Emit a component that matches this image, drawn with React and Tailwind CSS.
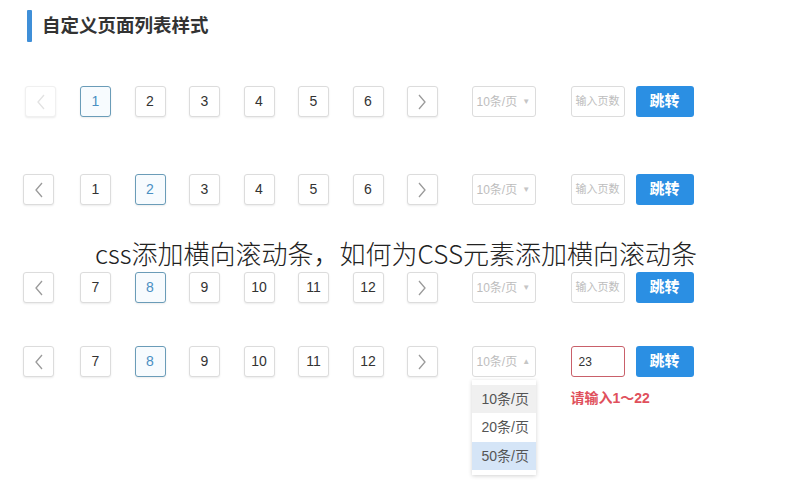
import React from "react";

const font = { fontFamily: '"Liberation Sans", "Noto Sans CJK SC", sans-serif' };

const Chevron = ({ dir, faint }) => (
  <svg width="10" height="16" viewBox="0 0 10 16" fill="none">
    <path
      d={dir === "left" ? "M8 1 L2 8 L8 15" : "M2 1 L8 8 L2 15"}
      stroke={faint ? "#e2e2e2" : "#9a9a9a"}
      strokeWidth="1.3"
    />
  </svg>
);

const Box = ({ children, active, faint, className = "" }) => (
  <div
    className={
      "w-[31px] h-[31px] flex items-center justify-center rounded-[3px] border text-[14px] shadow-[0_1px_2px_rgba(0,0,0,0.08)] " +
      (active
        ? "border-[#6a9cb8] text-[#4a8fc2] bg-[#f7fbfe] "
        : faint
        ? "border-[#f0f0f0] text-[#333] bg-white "
        : "border-[#dcdcdc] text-[#333] bg-white ") +
      className
    }
  >
    {children}
  </div>
);

const Row = ({ pages, active, prevFaint, open, error, className = "" }) => (
  <div className={"flex items-start " + className}>
    <Box faint={prevFaint} className={prevFaint ? "ml-[25px]" : "ml-[23px]"}>
      <Chevron dir="left" faint={prevFaint} />
    </Box>
    <div className={"flex gap-[23.5px] " + (prevFaint ? "ml-[24px]" : "ml-[26px]")}>
      {pages.map((p) => (
        <Box key={p} active={p === active}>
          {p}
        </Box>
      ))}
    </div>
    <Box className="ml-[23px]">
      <Chevron dir="right" />
    </Box>
    <div className="relative ml-[34px]">
      <div className="w-[64px] h-[31px] border border-[#dcdcdc] rounded-[3px] flex items-center pl-[4px] text-[12px] text-[#bdbdbd] bg-white">
        10条/页
        <span className="ml-[5px] text-[8px] text-[#c5c5c5]">{open ? "▲" : "▼"}</span>
      </div>
      {open && (
        <div className="absolute left-0 top-[34px] w-[64px] bg-white shadow-[0_1px_4px_rgba(0,0,0,0.18)] pt-[5px] pb-[5px] text-[14px] text-[#555]">
          <div className="h-[28px] flex items-center pl-[10px] bg-[#f0f0f0]">10条/页</div>
          <div className="h-[29px] flex items-center pl-[10px]">20条/页</div>
          <div className="h-[28px] flex items-center pl-[10px] bg-[#d5e5f7]">50条/页</div>
        </div>
      )}
    </div>
    <div className="relative ml-[35px]">
      {error ? (
        <div className="w-[54px] h-[31px] border border-[#c9606a] rounded-[3px] flex items-center pl-[7px] text-[12px] text-[#333] bg-white">
          23
        </div>
      ) : (
        <div className="w-[54px] h-[31px] border border-[#dcdcdc] rounded-[3px] flex items-center justify-center text-[11px] text-[#bdbdbd] bg-white">
          输入页数
        </div>
      )}
      {error && (
        <div className="absolute left-0 top-[42px] whitespace-nowrap text-[14px] font-bold text-[#e0505c]">
          请输入1～22
        </div>
      )}
    </div>
    <div className="ml-[11px] w-[58px] h-[31px] rounded-[3px] bg-[#2b8fe3] text-white text-[15px] font-bold flex items-center justify-center">
      跳转
    </div>
  </div>
);

export default function App() {
  return (
    <div className="relative w-[786px] h-[490px] bg-white overflow-hidden" style={font}>
      <div className="flex items-center pt-[10px] pl-[27px]">
        <div className="w-[5px] h-[32px] bg-[#3f8fd8] rounded-[1px]" />
        <div className="ml-[10px] text-[18.5px] font-bold text-[#333]">自定义页面列表样式</div>
      </div>
      <Row className="mt-[44px]" pages={[1, 2, 3, 4, 5, 6]} active={1} prevFaint />
      <Row className="mt-[57px]" pages={[1, 2, 3, 4, 5, 6]} active={2} />
      <Row className="mt-[67px]" pages={[7, 8, 9, 10, 11, 12]} active={8} />
      <Row className="mt-[43px]" pages={[7, 8, 9, 10, 11, 12]} active={8} open error />
      <div
        className="absolute left-[95px] top-[236px] text-[26px] font-light text-[#222] whitespace-nowrap leading-[34px]"
        style={{ fontFamily: '"Noto Sans CJK SC", sans-serif' }}
      >
        css添加横向滚动条，如何为CSS元素添加横向滚动条
      </div>
    </div>
  );
}
